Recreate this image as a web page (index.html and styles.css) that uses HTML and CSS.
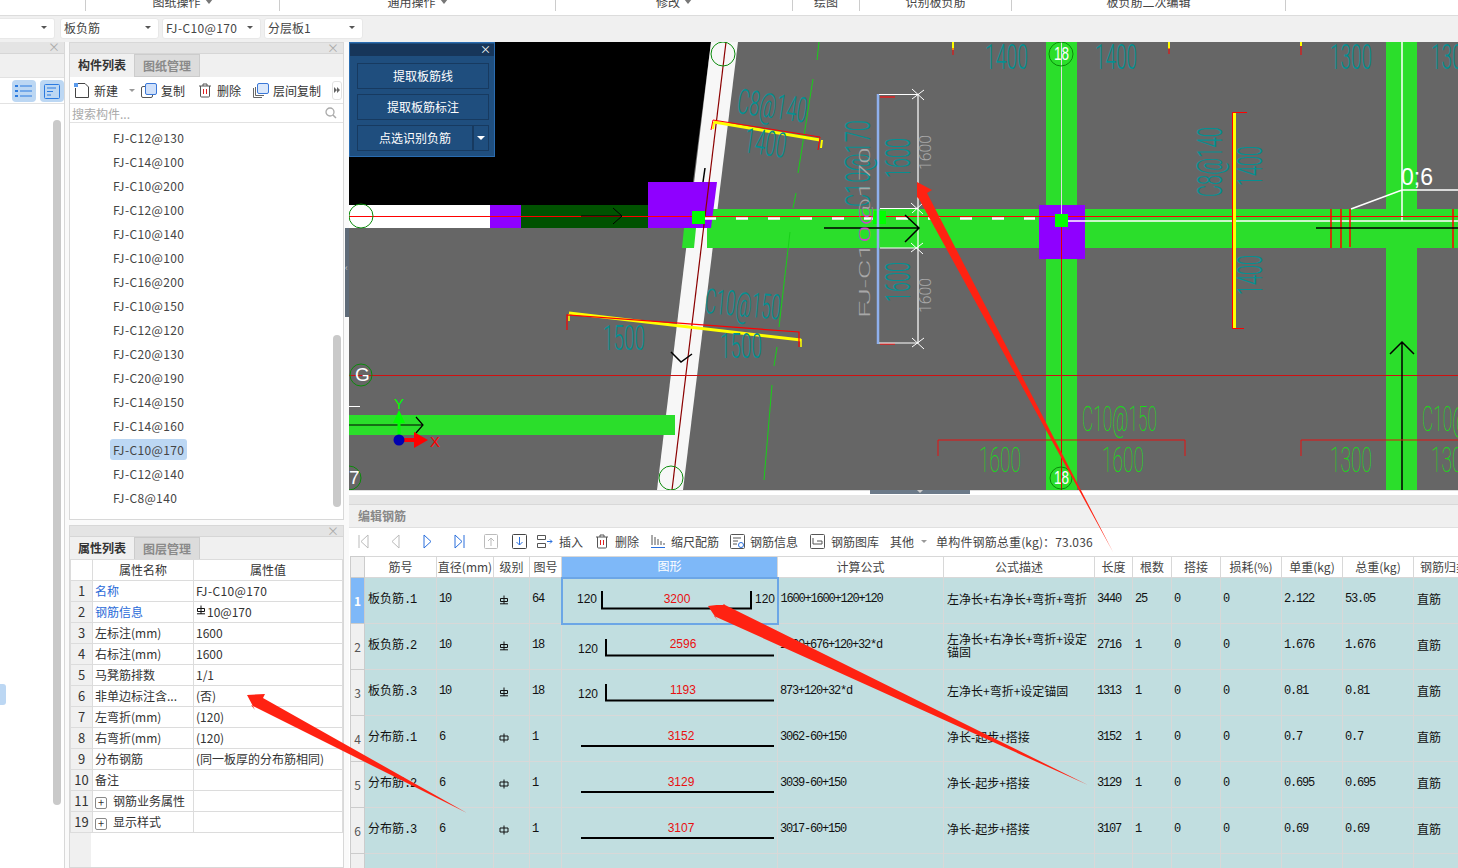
FILE: index.html
```html
<!DOCTYPE html>
<html lang="en">
<head>
    <meta charset="UTF-8">
    <meta name="viewport" content="width=device-width, initial-scale=1.0">
    <title>板负筋</title>
    <link rel="stylesheet" href="styles.css">
</head>
<body>
    <svg class="defs" width="0" height="0">
        <symbol id="grade3" viewBox="0 0 10 10"><path d="M5 .5V9M1.500 3.500H8.500V6.500H1.500ZM1 8.800H9" fill="none" stroke="#111" stroke-width="1"/></symbol>
        <symbol id="grade1" viewBox="0 0 10 10"><path d="M5 .5V9.500M1 3H9V7H1Z" fill="none" stroke="#111" stroke-width="1"/></symbol>
        <symbol id="trash" viewBox="0 0 14 15"><path d="M1 3H13M5 3V1H9V3M2.500 3V13Q2.500 14 3.500 14H10.500Q11.500 14 11.500 13V3" fill="none" stroke="#555"/><path d="M5.500 6V11M8.500 6V11" stroke="#e02020"/></symbol>
        <symbol id="copy" viewBox="0 0 16 15"><rect x=".5" y="3.500" width="11" height="11" rx="1.500" fill="#fff" stroke="#555"/><rect x="4.500" y=".5" width="11" height="11" rx="1.500" fill="#cfe0fa" stroke="#3b78d8"/></symbol>
    </svg>

    <div class="ribbon">
        <div class="rgroup" style="width:86px"></div>
        <div class="rgroup" style="width:194px">图纸操作 <i class="rcaret"></i></div>
        <div class="rgroup" style="width:276px">通用操作 <i class="rcaret"></i></div>
        <div class="rgroup" style="width:237px">修改 <i class="rcaret"></i></div>
        <div class="rgroup" style="width:67px">绘图</div>
        <div class="rgroup" style="width:152px">识别板负筋</div>
        <div class="rgroup" style="width:274px">板负筋二次编辑</div>
    </div>

    <div class="selects">
        <div class="select first"><span></span><i class="caret"></i></div>
        <div class="select"><span>板负筋</span><i class="caret"></i></div>
        <div class="select"><span class="latin">FJ-C10@170</span><i class="caret"></i></div>
        <div class="select"><span>分层板1</span><i class="caret"></i></div>
    </div>

    <div class="main">
        <div class="side-panel">
            <div class="panel-head side-head"><span class="close">×</span></div>
            <div class="side-tabs"></div>
            <div class="side-tools">
                <span class="view-btn">
                    <svg width="18" height="14" viewBox="0 0 18 14"><path d="M5 2H17M5 7H17M5 12H17" stroke="#2a7ae0"/><path d="M0 2H3M0 7H3M0 12H3" stroke="#2a7ae0" stroke-width="2"/></svg>
                </span>
                <span class="view-btn">
                    <svg width="16" height="15" viewBox="0 0 16 15"><rect x=".5" y=".5" width="15" height="14" rx="1" fill="none" stroke="#2a7ae0"/><path d="M3 4H12M3 7.500H9M3 11H7" stroke="#2a7ae0"/></svg>
                </span>
            </div>
            <div class="side-body">
                <div class="scroll side-scroll"></div>
                <div class="side-mark"></div>
            </div>
        </div>

        <div class="mid">
            <div class="panel list-panel">
                <div class="panel-head"><span class="close">×</span></div>
                <div class="tabs">
                    <span class="tab active">构件列表</span>
                    <span class="tab">图纸管理</span>
                </div>
                <div class="list-tools">
                    <span class="ltool new">
                        <svg width="16" height="15" viewBox="0 0 16 15"><path d="M1.500 5V14.500H14.500V4L11 .5H3.500" fill="none" stroke="#444"/><rect x="0" y="0" width="4" height="4" fill="#5b9bec"/></svg>
                        新建<i class="caret small"></i>
                    </span>
                    <span class="ltool copyt"><svg width="16" height="15"><use href="#copy"/></svg>复制</span>
                    <span class="ltool delt"><svg width="14" height="15"><use href="#trash"/></svg>删除</span>
                    <span class="ltool layert">
                        <svg width="16" height="15" viewBox="0 0 16 15"><path d="M.5 5V14.500H9M2.500 4V12.500H11" fill="none" stroke="#666"/><rect x="4.500" y=".5" width="11" height="10" rx="1.500" fill="#dbe8fb" stroke="#3b78d8"/></svg>
                        层间复制
                    </span>
                    <span class="more">
                        <svg width="6" height="6" viewBox="0 0 6 6"><path d="M0 0L3 3L0 6ZM3 0L6 3L3 6Z" fill="#666"/></svg>
                    </span>
                </div>
                <div class="search">
                    <span>搜索构件...</span>
                    <svg width="12" height="12" viewBox="0 0 12 12"><circle cx="5" cy="5" r="4" fill="none" stroke="#aaa" stroke-width="1.300"/><path d="M8 8L11 11" stroke="#aaa" stroke-width="1.500"/></svg>
                </div>
                <div class="list">
                    <div class="item"><span>FJ-C12@130</span></div>
                    <div class="item"><span>FJ-C14@100</span></div>
                    <div class="item"><span>FJ-C10@200</span></div>
                    <div class="item"><span>FJ-C12@100</span></div>
                    <div class="item"><span>FJ-C10@140</span></div>
                    <div class="item"><span>FJ-C10@100</span></div>
                    <div class="item"><span>FJ-C16@200</span></div>
                    <div class="item"><span>FJ-C10@150</span></div>
                    <div class="item"><span>FJ-C12@120</span></div>
                    <div class="item"><span>FJ-C20@130</span></div>
                    <div class="item"><span>FJ-C20@190</span></div>
                    <div class="item"><span>FJ-C14@150</span></div>
                    <div class="item"><span>FJ-C14@160</span></div>
                    <div class="item selected"><span>FJ-C10@170</span></div>
                    <div class="item"><span>FJ-C12@140</span></div>
                    <div class="item"><span>FJ-C8@140</span></div>
                    <div class="scroll list-scroll"></div>
                </div>
            </div>

            <div class="panel prop-panel">
                <div class="panel-head"><span class="close">×</span></div>
                <div class="tabs">
                    <span class="tab active">属性列表</span>
                    <span class="tab">图层管理</span>
                </div>
                <table class="props">
                    <colgroup><col class="p0"><col class="p1"><col class="p2"></colgroup>
                    <tr><th></th><th class="ph">属性名称</th><th class="ph">属性值</th></tr>
                    <tr><th>1</th><td class="link">名称</td><td class="latin">FJ-C10@170</td></tr>
                    <tr><th>2</th><td class="link">钢筋信息</td><td><svg class="g3 up" width="10" height="10"><use href="#grade3"/></svg>10@170</td></tr>
                    <tr><th>3</th><td>左标注(mm)</td><td>1600</td></tr>
                    <tr><th>4</th><td>右标注(mm)</td><td>1600</td></tr>
                    <tr><th>5</th><td>马凳筋排数</td><td>1/1</td></tr>
                    <tr><th>6</th><td>非单边标注含...</td><td>(否)</td></tr>
                    <tr><th>7</th><td>左弯折(mm)</td><td>(120)</td></tr>
                    <tr><th>8</th><td>右弯折(mm)</td><td>(120)</td></tr>
                    <tr><th>9</th><td>分布钢筋</td><td>(同一板厚的分布筋相同)</td></tr>
                    <tr><th>10</th><td>备注</td><td></td></tr>
                    <tr><th>11</th><td><span class="plus">+</span>钢筋业务属性</td><td></td></tr>
                    <tr><th>19</th><td><span class="plus">+</span>显示样式</td><td></td></tr>
                </table>
                <div class="prop-rest"><div></div></div>
            </div>
        </div>

        <div class="split"><div class="split-handle">‹</div></div>

        <div class="work">
            <div class="canvas">
                <svg class="cad" width="1109" height="448" viewBox="349 42 1109 448">
                    <defs>
                        <linearGradient id="fjfill" gradientUnits="userSpaceOnUse" x1="0" y1="0" x2="171" y2="0">
                            <stop offset=".41" stop-color="#a8a8a8"/>
                            <stop offset=".41" stop-color="#d040d0"/>
                            <stop offset=".64" stop-color="#d040d0"/>
                            <stop offset=".64" stop-color="#a8a8a8"/>
                        </linearGradient>
                    </defs>
                    <rect x="349" y="42" width="1109" height="448" fill="#666"/>
                    <path d="M349 42H711L693 182H648V205H349Z" fill="#000"/>
                    <path d="M711 42H738L683 490H657Z" fill="#f7f7f7"/>
                    <rect x="349" y="205" width="141" height="23" fill="#fff"/>
                    <rect x="490" y="205" width="31" height="23" fill="#8f00ff"/>
                    <rect x="521" y="205" width="127" height="23" fill="#005200"/>

                    <path d="M707 209H1458V248H707ZM684 228H696L694 248H682Z" fill="#2bde2b"/>
                    <rect x="1046" y="42" width="31" height="448" fill="#2bde2b"/>
                    <rect x="1386" y="42" width="31" height="448" fill="#2bde2b"/>
                    <rect x="349" y="415" width="326" height="20" fill="#2bde2b"/>
                    <path d="M648 182H717L711 228H648Z" fill="#8f00ff"/>
                    <rect x="1039" y="205" width="46" height="54" fill="#8f00ff"/>

                    <!-- axis and beam lines -->
                    <path d="M726 42L672 490" stroke="#8b0000" stroke-width="1.200"/>
                    <path d="M704 218.500H1035" stroke="#fff" stroke-width="2.500" stroke-dasharray="12 20"/>
                    <path d="M1067 221H1458M1402 42V221M1351 209L1402 190H1458" stroke="#fff" stroke-width="1.500" fill="none"/>
                    <path d="M1061.500 42V214" stroke="#ddd"/>
                    <path d="M1061.500 214V490" stroke="#e00000"/>
                    <path d="M349 216.500H1458" stroke="#f00"/>
                    <path d="M349 375.500H1458" stroke="#d01010"/>
                    <path d="M1331 209V248M1341 209V248M1350 209V247M1453 209V248" stroke="#f00" stroke-width="1.500"/>
                    <path d="M1316 228H1458" stroke="#000" stroke-width="1.500"/>

                    <!-- thin green dashes -->
                    <path d="M819 42L817 60M813 79L798 173M796 193L793 208M790 232L779 327M777 347L774 366M772 385L764 480" stroke="#18d018"/>

                    <!-- green nodes -->
                    <rect x="692" y="211" width="13" height="13" fill="#0f0"/>
                    <rect x="873" y="211" width="13" height="13" fill="#0f0"/>
                    <rect x="1055" y="214" width="13" height="13" fill="#0f0"/>

                    <!-- slab rebars -->
                    <path d="M714 122L820 140" stroke="#ff0" stroke-width="3"/>
                    <path d="M714 122L713 129M822 140L821 148" stroke="#ff0" stroke-width="2"/>
                    <path d="M711 130L713 120L820 137L818 150" stroke="#f00" fill="none"/>
                    <path d="M569 313L801 340" stroke="#ff0" stroke-width="3"/>
                    <path d="M569 314V321M801 339V347" stroke="#ff0" stroke-width="1.500"/>
                    <path d="M567 330V315L799 332V347" stroke="#f00" fill="none" stroke-width="1.200"/>
                    <path d="M1234.500 113V328" stroke="#ff0" stroke-width="3"/>
                    <path d="M1247 112.500H1232.500V328.500H1244" stroke="#f00" fill="none"/>
                    <path d="M953 42V50M1169 42V49M1301 42V46" stroke="#ff0" stroke-width="2"/>
                    <path d="M953 48V55M1169 48V54M1301 46V55" stroke="#f00"/>

                    <!-- selected dimension -->
                    <path d="M878 94V344" stroke="#8fb0ee" stroke-width="2.500"/>
                    <path d="M880 97H895M880 344H895" stroke="#e02020" stroke-width="1.500"/>
                    <path d="M879 94.500H918V343H879M880 208.500H918M880 248H918" stroke="#fff" fill="none" stroke-width="1.200"/>
                    <path d="M912 89L924 100M912 99L924 90M911 203L923 214M912 213L923 203M911 243L923 254M911 252L923 243M912 338L924 349M912 347L924 338" stroke="#fff"/>

                    <!-- direction arrows -->
                    <path d="M581 216H622M613 208L622 216L613 224" stroke="#000" fill="none"/>
                    <path d="M824 228H918M905 215L919 228L905 242" stroke="#000" fill="none" stroke-width="1.500"/>
                    <path d="M1402 490V343M1390 354L1402 342L1414 354" stroke="#000" fill="none" stroke-width="1.500"/>
                    <path d="M671 352L681 362L692 354M705 168L703 182" stroke="#000" fill="none" stroke-width="1.500"/>
                    <path d="M349 425H422M416 417L423 425L416 433" stroke="#000" fill="none" stroke-width="1.200"/>
                    <path d="M349 406.500H360" stroke="#fff"/>

                    <!-- CAD texts -->
                    <text class="ct teal" x="985" y="69" textLength="43" lengthAdjust="spacingAndGlyphs">1400</text>
                    <text class="ct teal" x="1095" y="69" textLength="42" lengthAdjust="spacingAndGlyphs">1400</text>
                    <text class="ct teal" x="1330" y="69" textLength="42" lengthAdjust="spacingAndGlyphs">1300</text>
                    <text class="ct teal" x="1431" y="69" textLength="42" lengthAdjust="spacingAndGlyphs">1300</text>
                    <text class="ct teal" transform="translate(736,113) rotate(8)" textLength="70" lengthAdjust="spacingAndGlyphs">C8@140</text>
                    <text class="ct teal" transform="translate(743,152) rotate(8)" textLength="42" lengthAdjust="spacingAndGlyphs">1400</text>
                    <text class="ct teal" transform="translate(704,313) rotate(5)" textLength="76" lengthAdjust="spacingAndGlyphs">C10@150</text>
                    <text class="ct teal" x="603" y="350" textLength="42" lengthAdjust="spacingAndGlyphs">1500</text>
                    <text class="ct teal" x="720" y="358" textLength="42" lengthAdjust="spacingAndGlyphs">1500</text>
                    <text class="ct teal" transform="translate(870,207) rotate(-90)" textLength="87" lengthAdjust="spacingAndGlyphs">C10@170</text>
                    <text class="ct teal" transform="translate(910,178) rotate(-90)" textLength="40" lengthAdjust="spacingAndGlyphs">1600</text>
                    <text class="ct teal" transform="translate(910,302) rotate(-90)" textLength="40" lengthAdjust="spacingAndGlyphs">1600</text>
                    <text class="ct teal" transform="translate(1222,197) rotate(-90)" textLength="70" lengthAdjust="spacingAndGlyphs">C8@140</text>
                    <text class="ct teal" transform="translate(1262,186) rotate(-90)" textLength="40" lengthAdjust="spacingAndGlyphs">1400</text>
                    <text class="ct teal" transform="translate(1262,295) rotate(-90)" textLength="40" lengthAdjust="spacingAndGlyphs">1400</text>
                    <text class="cs grey" transform="translate(931,170) rotate(-90)" textLength="35" lengthAdjust="spacingAndGlyphs">1600</text>
                    <text class="cs grey" transform="translate(931,313) rotate(-90)" textLength="35" lengthAdjust="spacingAndGlyphs">1600</text>
                    <text class="cs fj" transform="translate(870,318) rotate(-90)" textLength="171" lengthAdjust="spacingAndGlyphs">FJ-C10@170</text>
                    <text class="ct lime" x="1082" y="431" textLength="75" lengthAdjust="spacingAndGlyphs">C10@150</text>
                    <text class="ct lime" x="1422" y="431" textLength="75" lengthAdjust="spacingAndGlyphs">C10@150</text>
                    <text class="ct lime" x="979" y="472" textLength="42" lengthAdjust="spacingAndGlyphs">1600</text>
                    <text class="ct lime" x="1102" y="472" textLength="42" lengthAdjust="spacingAndGlyphs">1600</text>
                    <text class="ct lime" x="1330" y="472" textLength="42" lengthAdjust="spacingAndGlyphs">1300</text>
                    <text class="ct lime" x="1431" y="472" textLength="42" lengthAdjust="spacingAndGlyphs">1300</text>
                    <path d="M938 456V440H1185V456M1301 456V440H1458" stroke="#e81010" fill="none"/>

                    <!-- axis bubbles -->
                    <g fill="none" stroke="#0a8a0a">
                        <circle cx="723" cy="54" r="12"/>
                        <circle cx="1061" cy="54" r="12"/>
                        <circle cx="361" cy="216" r="12"/>
                        <circle cx="361" cy="375" r="11"/>
                        <circle cx="349" cy="478" r="12"/>
                        <circle cx="671" cy="478" r="12"/>
                        <circle cx="1061" cy="478" r="11"/>
                    </g>
                    <text class="bub" x="1054" y="60" textLength="15" lengthAdjust="spacingAndGlyphs">18</text>
                    <text class="bub" x="355" y="381">G</text>
                    <text class="bub" x="349" y="484">7</text>
                    <text class="bub" x="1054" y="484" textLength="15" lengthAdjust="spacingAndGlyphs">18</text>
                    <text class="zero" x="1401" y="185" textLength="32" lengthAdjust="spacingAndGlyphs">0;6</text>

                    <!-- ucs -->
                    <path d="M399 435V414" stroke="#0f0" stroke-width="3"/>
                    <path d="M393 423L399 410L405 423Z" fill="#0f0"/>
                    <path d="M399 440H416" stroke="#f00" stroke-width="4"/>
                    <path d="M414 432L428 440L414 448Z" fill="#f00"/>
                    <circle cx="399" cy="440" r="5.500" fill="#0000b0"/>
                    <text class="ucs-x" x="430" y="447">X</text>
                    <text class="ucs-y" x="394" y="409">Y</text>
                </svg>
                <div class="cad-dialog">
                    <div class="dlg-title"><span>×</span></div>
                    <div class="dlg-btn">提取板筋线</div>
                    <div class="dlg-btn">提取板筋标注</div>
                    <div class="dlg-split">
                        <div class="dlg-btn">点选识别负筋</div>
                        <div class="dlg-btn dlg-drop"><i></i></div>
                    </div>
                </div>
                <div class="canvas-handle"><i></i></div>
            </div>

            <div class="rebar-panel">
                <div class="rebar-strip"></div>
                <div class="rebar-head"></div>
                <div class="rebar-title">编辑钢筋</div>
                <div class="rebar-tools">
                    <svg class="nav" width="11" height="15" viewBox="0 0 11 15"><path d="M1 1V14M10 1L3 7.500L10 14Z" fill="none" stroke="#bbb"/></svg>
                    <svg class="nav" width="11" height="15" viewBox="0 0 11 15"><path d="M9 1L2 7.500L9 14Z" fill="none" stroke="#bbb"/></svg>
                    <svg class="nav" width="11" height="15" viewBox="0 0 11 15"><path d="M2 1L9 7.500L2 14Z" fill="none" stroke="#2a6fdc"/></svg>
                    <svg class="nav" width="11" height="15" viewBox="0 0 11 15"><path d="M1 1L8 7.500L1 14ZM10 1V14" fill="none" stroke="#2a6fdc"/></svg>
                    <svg class="box-a" width="14" height="15" viewBox="0 0 14 15"><rect x=".5" y=".5" width="13" height="14" rx="1" fill="none" stroke="#bbb"/><path d="M7 12V4M4 7L7 4L10 7" fill="none" stroke="#bbb"/></svg>
                    <svg class="box-b" width="15" height="15" viewBox="0 0 15 15"><rect x=".5" y=".5" width="14" height="14" rx="1" fill="none" stroke="#444"/><path d="M7.500 3V11M4.500 8L7.500 11L10.500 8" fill="none" stroke="#2a6fdc"/></svg>
                    <span class="rtool insert"><svg width="16" height="13" viewBox="0 0 16 13"><path d="M.5 .5H8.500V4.500H.5ZM.5 8.500H8.500V12.500H.5Z" fill="none" stroke="#555"/><path d="M10 6.500H15M13 4.500L15 6.500L13 8.500" fill="none" stroke="#2a6fdc"/></svg>插入</span>
                    <span class="rtool del"><svg width="14" height="15"><use href="#trash"/></svg>删除</span>
                    <span class="rtool scale"><svg width="14" height="15" viewBox="0 0 14 15"><path d="M1 1V11M4 3V11M7 5V11M10 7V11M13 9V11" stroke="#555"/><path d="M0 13.500H14" stroke="#2a6fdc"/></svg>缩尺配筋</span>
                    <span class="rtool info"><svg width="15" height="15" viewBox="0 0 15 15"><rect x=".5" y=".5" width="14" height="14" rx="1" fill="none" stroke="#555"/><path d="M3 4H11M3 7H8M3 10H7" stroke="#555"/><circle cx="11" cy="11" r="2.500" fill="#fff" stroke="#2a6fdc"/></svg>钢筋信息</span>
                    <span class="rtool lib"><svg width="15" height="15" viewBox="0 0 15 15"><rect x=".5" y=".5" width="14" height="14" rx="1" fill="none" stroke="#555"/><path d="M3 4V10H12V7H7" fill="none" stroke="#555"/></svg>钢筋图库</span>
                    <span class="rtool other">其他<i class="caret small"></i></span>
                    <span class="total">单构件钢筋总重(kg)：73.036</span>
                </div>
                <div class="rebar-wrap">
                    <table class="rebar">
                        <colgroup>
                            <col class="c0"><col class="c1"><col class="c2"><col class="c3"><col class="c4"><col class="c5"><col class="c6"><col class="c7"><col class="c8"><col class="c9"><col class="c10"><col class="c11"><col class="c12"><col class="c13"><col class="c14">
                        </colgroup>
                        <tr class="head">
                            <th></th><th>筋号</th><th>直径(mm)</th><th>级别</th><th>图号</th><th class="shape-head">图形</th><th>计算公式</th><th>公式描述</th><th>长度</th><th>根数</th><th>搭接</th><th>损耗(%)</th><th>单重(kg)</th><th>总重(kg)</th><th class="clip">钢筋归类</th>
                        </tr>
                        <tr>
                            <th class="row-on">1</th><td>板负筋<span class="num">.1</span></td><td class="num">10</td><td class="gr"><svg width="10" height="10"><use href="#grade3"/></svg></td><td class="num">64</td>
                            <td class="shape on"><svg width="212" height="42"><path d="M39 12V29.500H188V12" fill="none" stroke="#000" stroke-width="2"/><text class="dim" x="14" y="24">120</text><text class="dim" x="192" y="24">120</text><text class="len" x="114" y="24">3200</text></svg></td>
                            <td class="num">1600+1600+120+120</td><td>左净长+右净长+弯折+弯折</td><td class="num">3440</td><td class="num">25</td><td class="num">0</td><td class="num">0</td><td class="num">2.122</td><td class="num">53.05</td><td>直筋</td>
                        </tr>
                        <tr>
                            <th>2</th><td>板负筋<span class="num">.2</span></td><td class="num">10</td><td class="gr"><svg width="10" height="10"><use href="#grade3"/></svg></td><td class="num">18</td>
                            <td class="shape"><svg width="214" height="44"><path d="M44 14V30.500H212" fill="none" stroke="#000" stroke-width="2"/><text class="dim" x="16" y="28">120</text><text class="len" x="121" y="23">2596</text></svg></td>
                            <td class="num">1800+676+120+32*d</td><td>左净长+右净长+弯折+设定锚固</td><td class="num">2716</td><td class="num">1</td><td class="num">0</td><td class="num">0</td><td class="num">1.676</td><td class="num">1.676</td><td>直筋</td>
                        </tr>
                        <tr>
                            <th>3</th><td>板负筋<span class="num">.3</span></td><td class="num">10</td><td class="gr"><svg width="10" height="10"><use href="#grade3"/></svg></td><td class="num">18</td>
                            <td class="shape"><svg width="214" height="44"><path d="M44 14V30.500H212" fill="none" stroke="#000" stroke-width="2"/><text class="dim" x="16" y="28">120</text><text class="len" x="121" y="24">1193</text></svg></td>
                            <td class="num">873+120+32*d</td><td>左净长+弯折+设定锚固</td><td class="num">1313</td><td class="num">1</td><td class="num">0</td><td class="num">0</td><td class="num">0.81</td><td class="num">0.81</td><td>直筋</td>
                        </tr>
                        <tr>
                            <th>4</th><td>分布筋<span class="num">.1</span></td><td class="num">6</td><td class="gr"><svg width="10" height="10"><use href="#grade1"/></svg></td><td class="num">1</td>
                            <td class="shape"><svg width="214" height="44"><path d="M19 30H212" stroke="#000" stroke-width="2"/><text class="len" x="119" y="24">3152</text></svg></td>
                            <td class="num">3062-60+150</td><td>净长-起步+搭接</td><td class="num">3152</td><td class="num">1</td><td class="num">0</td><td class="num">0</td><td class="num">0.7</td><td class="num">0.7</td><td>直筋</td>
                        </tr>
                        <tr>
                            <th>5</th><td>分布筋<span class="num">.2</span></td><td class="num">6</td><td class="gr"><svg width="10" height="10"><use href="#grade1"/></svg></td><td class="num">1</td>
                            <td class="shape"><svg width="214" height="44"><path d="M19 30H212" stroke="#000" stroke-width="2"/><text class="len" x="119" y="24">3129</text></svg></td>
                            <td class="num">3039-60+150</td><td>净长-起步+搭接</td><td class="num">3129</td><td class="num">1</td><td class="num">0</td><td class="num">0</td><td class="num">0.695</td><td class="num">0.695</td><td>直筋</td>
                        </tr>
                        <tr>
                            <th>6</th><td>分布筋<span class="num">.3</span></td><td class="num">6</td><td class="gr"><svg width="10" height="10"><use href="#grade1"/></svg></td><td class="num">1</td>
                            <td class="shape"><svg width="214" height="44"><path d="M19 30H212" stroke="#000" stroke-width="2"/><text class="len" x="119" y="24">3107</text></svg></td>
                            <td class="num">3017-60+150</td><td>净长-起步+搭接</td><td class="num">3107</td><td class="num">1</td><td class="num">0</td><td class="num">0</td><td class="num">0.69</td><td class="num">0.69</td><td>直筋</td>
                        </tr>
                        <tr>
                            <th></th><td></td><td></td><td></td><td></td><td></td><td></td><td></td><td></td><td></td><td></td><td></td><td></td><td></td><td></td>
                        </tr>
                    </table>
                </div>
            </div>
        </div>
    </div>

    <!-- annotation arrows drawn over the screenshot -->
    <svg class="marks" width="1458" height="868">
        <polygon points="917,182 932,190 927,193 1113,552 919,199 917,197"/>
        <polygon points="247,695 265,694 263,698 467,813 251,705 255,710"/>
        <polygon points="708,606 725,604 723,604 1088,785 714,616 718,621"/>
    </svg>
</body>
</html>
```

FILE: styles.css
```css
* {
    box-sizing: border-box;
}

html, body {
    margin: 0;
    height: 868px;
    overflow: hidden;
}

body {
    position: relative;
    width: 1458px;
    background-color: #fafafa;
    color: #333;
    font-family: "Noto Sans CJK SC", "Noto Sans", sans-serif;
    font-size: 12px;
}

.defs {
    position: absolute;
}

.latin {
    letter-spacing: .35px;
}

/* top ribbon, only the bottom of its labels is on screen */
.ribbon {
    display: flex;
    height: 16px;
    background-color: #fff;
    border-bottom: 1px solid #dcdcdc;
    overflow: hidden;
}

.rgroup {
    display: flex;
    justify-content: center;
    gap: 4px;
    height: 15px;
    margin-top: -4px;
    padding-top: 0;
    border-right: 1px solid #ccc;
    color: #444;
    line-height: 12px;
}

.rcaret {
    width: 0;
    height: 0;
    margin-top: 3px;
    border: 4px solid transparent;
    border-top: 5px solid #777;
}

.selects {
    display: flex;
    gap: 3px;
    height: 26px;
    padding: 2px 0 0;
    background-color: #f0f0f0;
}

.select {
    display: flex;
    align-items: center;
    justify-content: space-between;
    width: 99px;
    height: 21px;
    padding: 0 7px 2px 3px;
    background-color: #fff;
    border: 1px solid #e8e8e8;
    border-radius: 3px;
    color: #444;
}

.select.first {
    width: 55px;
    margin-right: 2px;
    border-left: none;
    border-radius: 0 3px 3px 0;
}

.caret {
    width: 0;
    height: 0;
    margin-top: 3px;
    border: 3px solid transparent;
    border-top: 3px solid #555;
}

.caret.small {
    margin-left: 7px;
    border-top-color: #999;
}

.main {
    display: flex;
    height: 826px;
}

.side-panel {
    display: flex;
    flex-direction: column;
    width: 65px;
    background-color: #fff;
    border-right: 1px solid #d8d8d8;
}

.panel-head {
    position: relative;
    flex: none;
    height: 11px;
    background-color: #e4e4e4;
    border-bottom: 1px solid #d6d6d6;
}

.side-head {
    height: 12px;
}

.close {
    position: absolute;
    top: -2px;
    right: 4px;
    color: #aaa;
    font-size: 12px;
    line-height: 14px;
}

.side-tabs {
    flex: none;
    height: 23px;
    background-color: #f0f0f0;
}

.side-tools {
    display: flex;
    flex: none;
    gap: 4px;
    height: 27px;
    padding: 2px 0 0 12px;
    border-top: 1px solid #e2e2e2;
    border-bottom: 1px solid #e2e2e2;
}

.view-btn {
    display: flex;
    align-items: center;
    justify-content: center;
    width: 24px;
    height: 22px;
    background-color: #bcd7f3;
    border-radius: 4px;
}

.side-body {
    position: relative;
    flex: 1;
}

.scroll {
    position: absolute;
    width: 8px;
    background-color: #c9c9c9;
    border-radius: 4px;
}

.side-scroll {
    top: 16px;
    left: 53px;
    height: 685px;
}

.side-mark {
    position: absolute;
    top: 580px;
    left: 0;
    width: 6px;
    height: 21px;
    background-color: #bcd7f3;
    border-radius: 0 3px 3px 0;
}

.mid {
    display: flex;
    flex-direction: column;
    flex: none;
    gap: 5px;
    width: 275px;
    margin-left: 4px;
}

.panel {
    display: flex;
    flex-direction: column;
    background-color: #fff;
    border: 1px solid #d8d8d8;
}

.list-panel {
    height: 478px;
}

.prop-panel {
    height: 343px;
}

.tabs {
    display: flex;
    flex: none;
    height: 23px;
    background-color: #f0f0f0;
}

.tab {
    width: 65px;
    padding-top: 2px;
    background-color: #dcdcdc;
    border: 1px solid #ccc;
    border-left: none;
    color: #8a8a8a;
    font-weight: 700;
    text-align: center;
}

.tab.active {
    background-color: #f0f0f0;
    border-top: none;
    border-bottom: none;
    color: #333;
}

.list-tools {
    display: flex;
    flex: none;
    align-items: center;
    height: 27px;
    border-bottom: 1px solid #e2e2e2;
    white-space: nowrap;
}

.ltool {
    display: flex;
    flex: none;
    align-items: center;
    line-height: 15px;
}

.ltool svg {
    flex: none;
}

.new {
    gap: 4px;
    margin-left: 4px;
}

.copyt {
    gap: 4px;
    margin-left: 6px;
}

.delt {
    gap: 5px;
    margin-left: 13px;
}

.layert {
    gap: 4px;
    margin-left: 12px;
}

.more {
    display: flex;
    flex: none;
    align-items: center;
    justify-content: center;
    width: 10px;
    height: 19px;
    margin-left: 11px;
    border: 1px solid #e2e2e2;
    border-radius: 3px;
}

.search {
    display: flex;
    flex: none;
    align-items: center;
    justify-content: space-between;
    height: 19px;
    padding: 0 6px 0 2px;
    border-bottom: 1px solid #e2e2e2;
    color: #aaa;
}

.list {
    position: relative;
    flex: 1;
    padding-top: 3px;
}

.item {
    height: 24px;
    padding-left: 40px;
    color: #444;
    line-height: 24px;
}

.item span {
    display: inline-block;
    height: 21px;
    padding: 0 3px;
    letter-spacing: .35px;
    line-height: 21px;
}

.item.selected span {
    background-color: #bcd7f3;
    border-radius: 3px;
}

.list-scroll {
    top: 212px;
    right: 2px;
    height: 172px;
}

/* property table */
.props {
    flex: none;
    width: 272px;
    margin-top: -1px;
    border-collapse: collapse;
    table-layout: fixed;
}

.p0 {
    width: 22px;
}

.p1 {
    width: 101px;
}

.p2 {
    width: 149px;
}

.props th,
.props td {
    height: 21px;
    padding: 0 0 2px 2px;
    border: 1px solid #dcdcdc;
    font-weight: 400;
    line-height: 17px;
    white-space: nowrap;
    overflow: hidden;
}

.props th {
    padding: 0 0 2px;
    background-color: #f0f0f0;
    font-size: 13px;
    text-align: center;
}

.props th.ph {
    background-color: #fff;
    font-size: 12px;
}

.props tr:first-child th:first-child {
    background-color: #fff;
}

.link {
    color: #2a6bd8;
}

.plus {
    display: inline-block;
    width: 12px;
    height: 12px;
    margin-right: 6px;
    border: 1px solid #888;
    border-radius: 2px;
    font-size: 11px;
    line-height: 9px;
    text-align: center;
    vertical-align: -1px;
}

.g3.up {
    margin-right: 1px;
    vertical-align: 2px;
}

.prop-rest {
    flex: 1;
}

.prop-rest div {
    width: 21px;
    height: 100%;
    background-color: #f0f0f0;
}

.split {
    position: relative;
    flex: none;
    width: 5px;
}

.split-handle {
    position: absolute;
    top: 186px;
    right: 0;
    width: 4px;
    height: 89px;
    background-color: #5f6b78;
    color: #ccc;
    font-size: 9px;
    line-height: 79px;
}

.work {
    display: flex;
    flex-direction: column;
    flex: 1;
    min-width: 0;
}

.canvas {
    position: relative;
    flex: none;
    height: 448px;
}

.cad {
    display: block;
}

.ct {
    font-family: Roboto, "Liberation Sans", sans-serif;
    font-size: 35px;
    font-weight: 100;
}

.teal {
    fill: #068f91;
    font-weight: 300;
}

.lime {
    fill: #12e012;
}

.cs {
    font-family: Roboto, "Liberation Sans", sans-serif;
    font-size: 17px;
    font-weight: 300;
}

.grey {
    fill: #a8a8a8;
}

.fj {
    fill: url(#fjfill);
    font-size: 15px;
}

.bub {
    fill: #fff;
    font-family: "Liberation Sans", sans-serif;
    font-size: 19px;
}

.zero {
    fill: #fff;
    font-family: "Liberation Sans", sans-serif;
    font-size: 24px;
}

.ucs-x,
.ucs-y {
    font-family: "Liberation Sans", sans-serif;
    font-size: 15px;
}

.ucs-x {
    fill: #f00;
}

.ucs-y {
    fill: #0f0;
}

.cad-dialog {
    position: absolute;
    top: 0;
    left: 0;
    width: 146px;
    height: 115px;
    padding: 0 5px 0 7px;
    background-color: #1f4e7e;
    border: 1px solid #2a6cb0;
    color: #fff;
}

.dlg-title {
    height: 12px;
    margin: 1px -5px 7px -7px;
    padding-right: 3px;
    background-color: #17365a;
    font-size: 11px;
    line-height: 11px;
    text-align: right;
}

.dlg-btn {
    height: 26px;
    margin-bottom: 5px;
    background-color: #1f4e7e;
    border: 1px solid #173a60;
    line-height: 24px;
    text-align: center;
}

.dlg-split {
    display: flex;
}

.dlg-split .dlg-btn:first-child {
    flex: 1;
}

.dlg-drop {
    display: flex;
    align-items: center;
    justify-content: center;
    width: 16px;
}

.dlg-drop i {
    width: 0;
    height: 0;
    margin-top: 4px;
    border: 4px solid transparent;
    border-top: 4px solid #fff;
}

.canvas-handle {
    position: absolute;
    bottom: -4px;
    left: 521px;
    display: flex;
    justify-content: center;
    width: 100px;
    height: 4px;
    background-color: #6c7a89;
}

.canvas-handle i {
    width: 0;
    height: 0;
    border: 3px solid transparent;
    border-top: 3px solid #ccc;
}

.rebar-panel {
    flex: 1;
    min-height: 0;
    background-color: #fff;
    overflow: hidden;
}

.rebar-strip {
    height: 5px;
    border-top: 1px solid #ddd;
}

.rebar-head {
    height: 10px;
    background-color: #e6e6e6;
    border-bottom: 1px solid #d8d8d8;
}

.rebar-title {
    height: 23px;
    padding-left: 9px;
    background-color: #f0f0f0;
    border-bottom: 1px solid #e0e0e0;
    color: #888;
    font-weight: 700;
    line-height: 22px;
}

.rebar-tools {
    display: flex;
    align-items: center;
    height: 28px;
    padding: 0 0 1px 9px;
    color: #444;
    line-height: 15px;
}

.nav {
    flex: none;
    margin-right: 21px;
}

.box-a {
    flex: none;
    margin: 0 14px 0 -2px;
}

.box-b {
    flex: none;
    margin-right: 12px;
}

.rtool {
    display: flex;
    flex: none;
    align-items: center;
    gap: 6px;
    margin-right: 12px;
}

.insert {
    gap: 6px;
    margin-left: -2px;
}

.scale,
.lib {
    margin-right: 11px;
}

.info {
    gap: 5px;
}

.other {
    gap: 0;
    margin-right: 9px;
}

.total {
    flex: none;
    letter-spacing: .15px;
}

.rebar-wrap {
    overflow: hidden;
}

.rebar {
    width: 1164px;
    margin-left: 1px;
    border-collapse: collapse;
    table-layout: fixed;
}

.c0 { width: 14px; }
.c1 { width: 72px; }
.c2 { width: 57px; }
.c3 { width: 36px; }
.c4 { width: 32px; }
.c5 { width: 216px; }
.c6 { width: 166px; }
.c7 { width: 151px; }
.c8 { width: 38px; }
.c9 { width: 39px; }
.c10 { width: 49px; }
.c11 { width: 61px; }
.c12 { width: 61px; }
.c13 { width: 71px; }
.c14 { width: 100px; }

.rebar th,
.rebar td {
    height: 46px;
    padding: 0 0 4px 3px;
    border: 1px solid #d8d8d8;
    font-weight: 400;
    line-height: 13px;
    overflow: hidden;
}

.rebar td {
    background-color: #c1dee0;
    color: #111;
}

.rebar td.num {
    padding-left: 2px;
    padding-bottom: 3px;
}

.rebar tr th:first-child {
    padding: 0;
    background-color: #f0f0f0;
    border-color: #ccc;
    color: #555;
    font-size: 12px;
    text-align: center;
}

.rebar .head th {
    height: 21px;
    padding: 0 0 2px;
    background-color: #fff;
    color: #444;
    text-align: center;
    white-space: nowrap;
}

.rebar .head .shape-head {
    background-color: #7eb8f8;
    color: #fff;
}

.rebar .head .clip {
    padding-left: 6px;
    text-align: left;
}

.rebar tr th.row-on {
    background-color: #7eb8f8;
    color: #fff;
    font-weight: 700;
}

.num {
    font-family: "Liberation Mono", monospace;
    font-size: 12px;
    letter-spacing: -1.200px;
}

.rebar td.gr {
    padding-top: 3px;
}

.gr svg {
    display: block;
    margin-left: 2px;
}

.rebar td.shape {
    padding: 0;
    vertical-align: top;
}

.rebar td.shape.on {
    border: 2px solid #6ca6e6;
}

.shape svg {
    display: block;
    overflow: visible;
}

.dim {
    fill: #111;
    font-family: "Liberation Sans", sans-serif;
    font-size: 12px;
}

.len {
    fill: #e81010;
    font-family: "Liberation Sans", sans-serif;
    font-size: 12px;
    text-anchor: middle;
}

.marks {
    position: absolute;
    top: 0;
    left: 0;
    pointer-events: none;
}

.marks polygon {
    fill: #ff2212;
}
```
